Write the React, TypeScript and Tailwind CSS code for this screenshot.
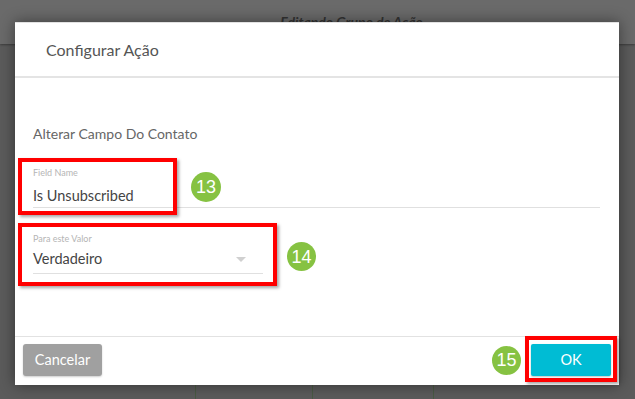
import React from "react";

function Badge({ n, className }: { n: string; className: string }) {
  return (
    <div
      className={
        "absolute flex items-center justify-center rounded-full bg-[#86c242] text-white text-[18px] leading-none " +
        className
      }
      style={{ fontFamily: '"Liberation Sans", Arial, sans-serif' }}
    >
      {n}
    </div>
  );
}

export default function App() {
  return (
    <div
      className="relative w-[635px] h-[399px] overflow-hidden bg-[#5b5b5b]"
      style={{ fontFamily: 'Lato, "Open Sans", sans-serif' }}
    >
      <div className="h-[44px] bg-[#6a6a6a] shadow-[0_1px_2px_rgba(0,0,0,0.35)] flex justify-center">
        <span className="mt-[11px] ml-[68px] text-[14px] italic font-bold text-[#333]">Editando Grupo de Ação</span>
      </div>
      <div className="flex">
        <div className="ml-[195px] w-px h-[400px] bg-[#4a5a44]" />
        <div className="ml-[116px] w-px h-[400px] bg-[#4a5a44]" />
        <div className="ml-[120px] w-px h-[400px] bg-[#4a5a44]" />
      </div>

      {/* Modal */}
      <div className="absolute left-[15px] top-[22px] w-[604px] h-[363px] bg-white flex flex-col shadow-[0_0_14px_rgba(0,0,0,0.45)] border-t border-[#e2e2e2]">
        <div className="h-[55px] shrink-0 border-b-2 border-[#e4e4e4] flex items-center pl-[31px]">
          <span className="text-[16px] text-[#555]">Configurar Ação</span>
        </div>
        <div className="flex-1 px-[18px] pt-[48px]">
          <div className="text-[14px] leading-[16px] text-[#666]">Alterar Campo Do Contato</div>

          {/* Field 1 */}
          <div className="relative mt-[25px] w-[567px]">
            <div className="absolute left-[-15px] top-[-9px] w-[159px] h-[57px] border-[4px] border-[#ff0000] shadow-[2px_2px_3px_rgba(0,0,0,0.35)]" />
            <div className="text-[9px] leading-[11px] text-[#b5b5b5]">Field Name</div>
            <div className="mt-[9px] text-[14.5px] leading-[18px] text-[#444]">Is Unsubscribed</div>
            <div className="mt-[2px] h-px bg-[#e0e0e0]" />
            <Badge n="13" className="left-[158px] top-[5px] w-[30px] h-[30px]" />
          </div>

          {/* Field 2 */}
          <div className="relative mt-[25px] w-[230px]">
            <div className="absolute left-[-15px] top-[-10px] w-[259px] h-[63px] border-[4px] border-[#ff0000] shadow-[2px_2px_3px_rgba(0,0,0,0.35)]" />
            <div className="text-[9px] leading-[11px] text-[#b5b5b5]">Para este Valor</div>
            <div className="relative mt-[6px] text-[14.5px] leading-[18px] text-[#444]">
              Verdadeiro
              <div className="absolute right-[17px] top-[7px] w-0 h-0 border-l-[5px] border-r-[5px] border-t-[5px] border-l-transparent border-r-transparent border-t-[#d0d0d0]" />
            </div>
            <div className="mt-[5px] h-px bg-[#e0e0e0]" />
            <Badge n="14" className="left-[254px] top-[9px] w-[29px] h-[29px]" />
          </div>
        </div>
        <div className="h-[49px] shrink-0 border-t border-[#e2e2e2] flex items-center justify-between px-[8px] pb-[2px]">
          <button className="w-[79px] h-[32px] rounded-[3px] bg-[#a0a0a0] text-white text-[14.5px] shadow-[0_1px_2px_rgba(0,0,0,0.2)]">
            Cancelar
          </button>
          <div className="flex items-center">
            <div className="relative w-[29px] h-[29px] mr-[10px]">
              <Badge n="15" className="left-0 top-0 w-[29px] h-[29px]" />
            </div>
            <div className="relative">
              <div className="absolute left-[-6px] top-[-8px] right-[-6px] bottom-[-6px] border-[4px] border-[#ff0000] shadow-[2px_2px_3px_rgba(0,0,0,0.35)]" />
              <button className="relative w-[80px] h-[32px] rounded-[2px] bg-[#00bcd4] text-white text-[14.5px] shadow-[0_1px_2px_rgba(0,0,0,0.25)]">
                OK
              </button>
            </div>
          </div>
        </div>
      </div>
    </div>
  );
}
